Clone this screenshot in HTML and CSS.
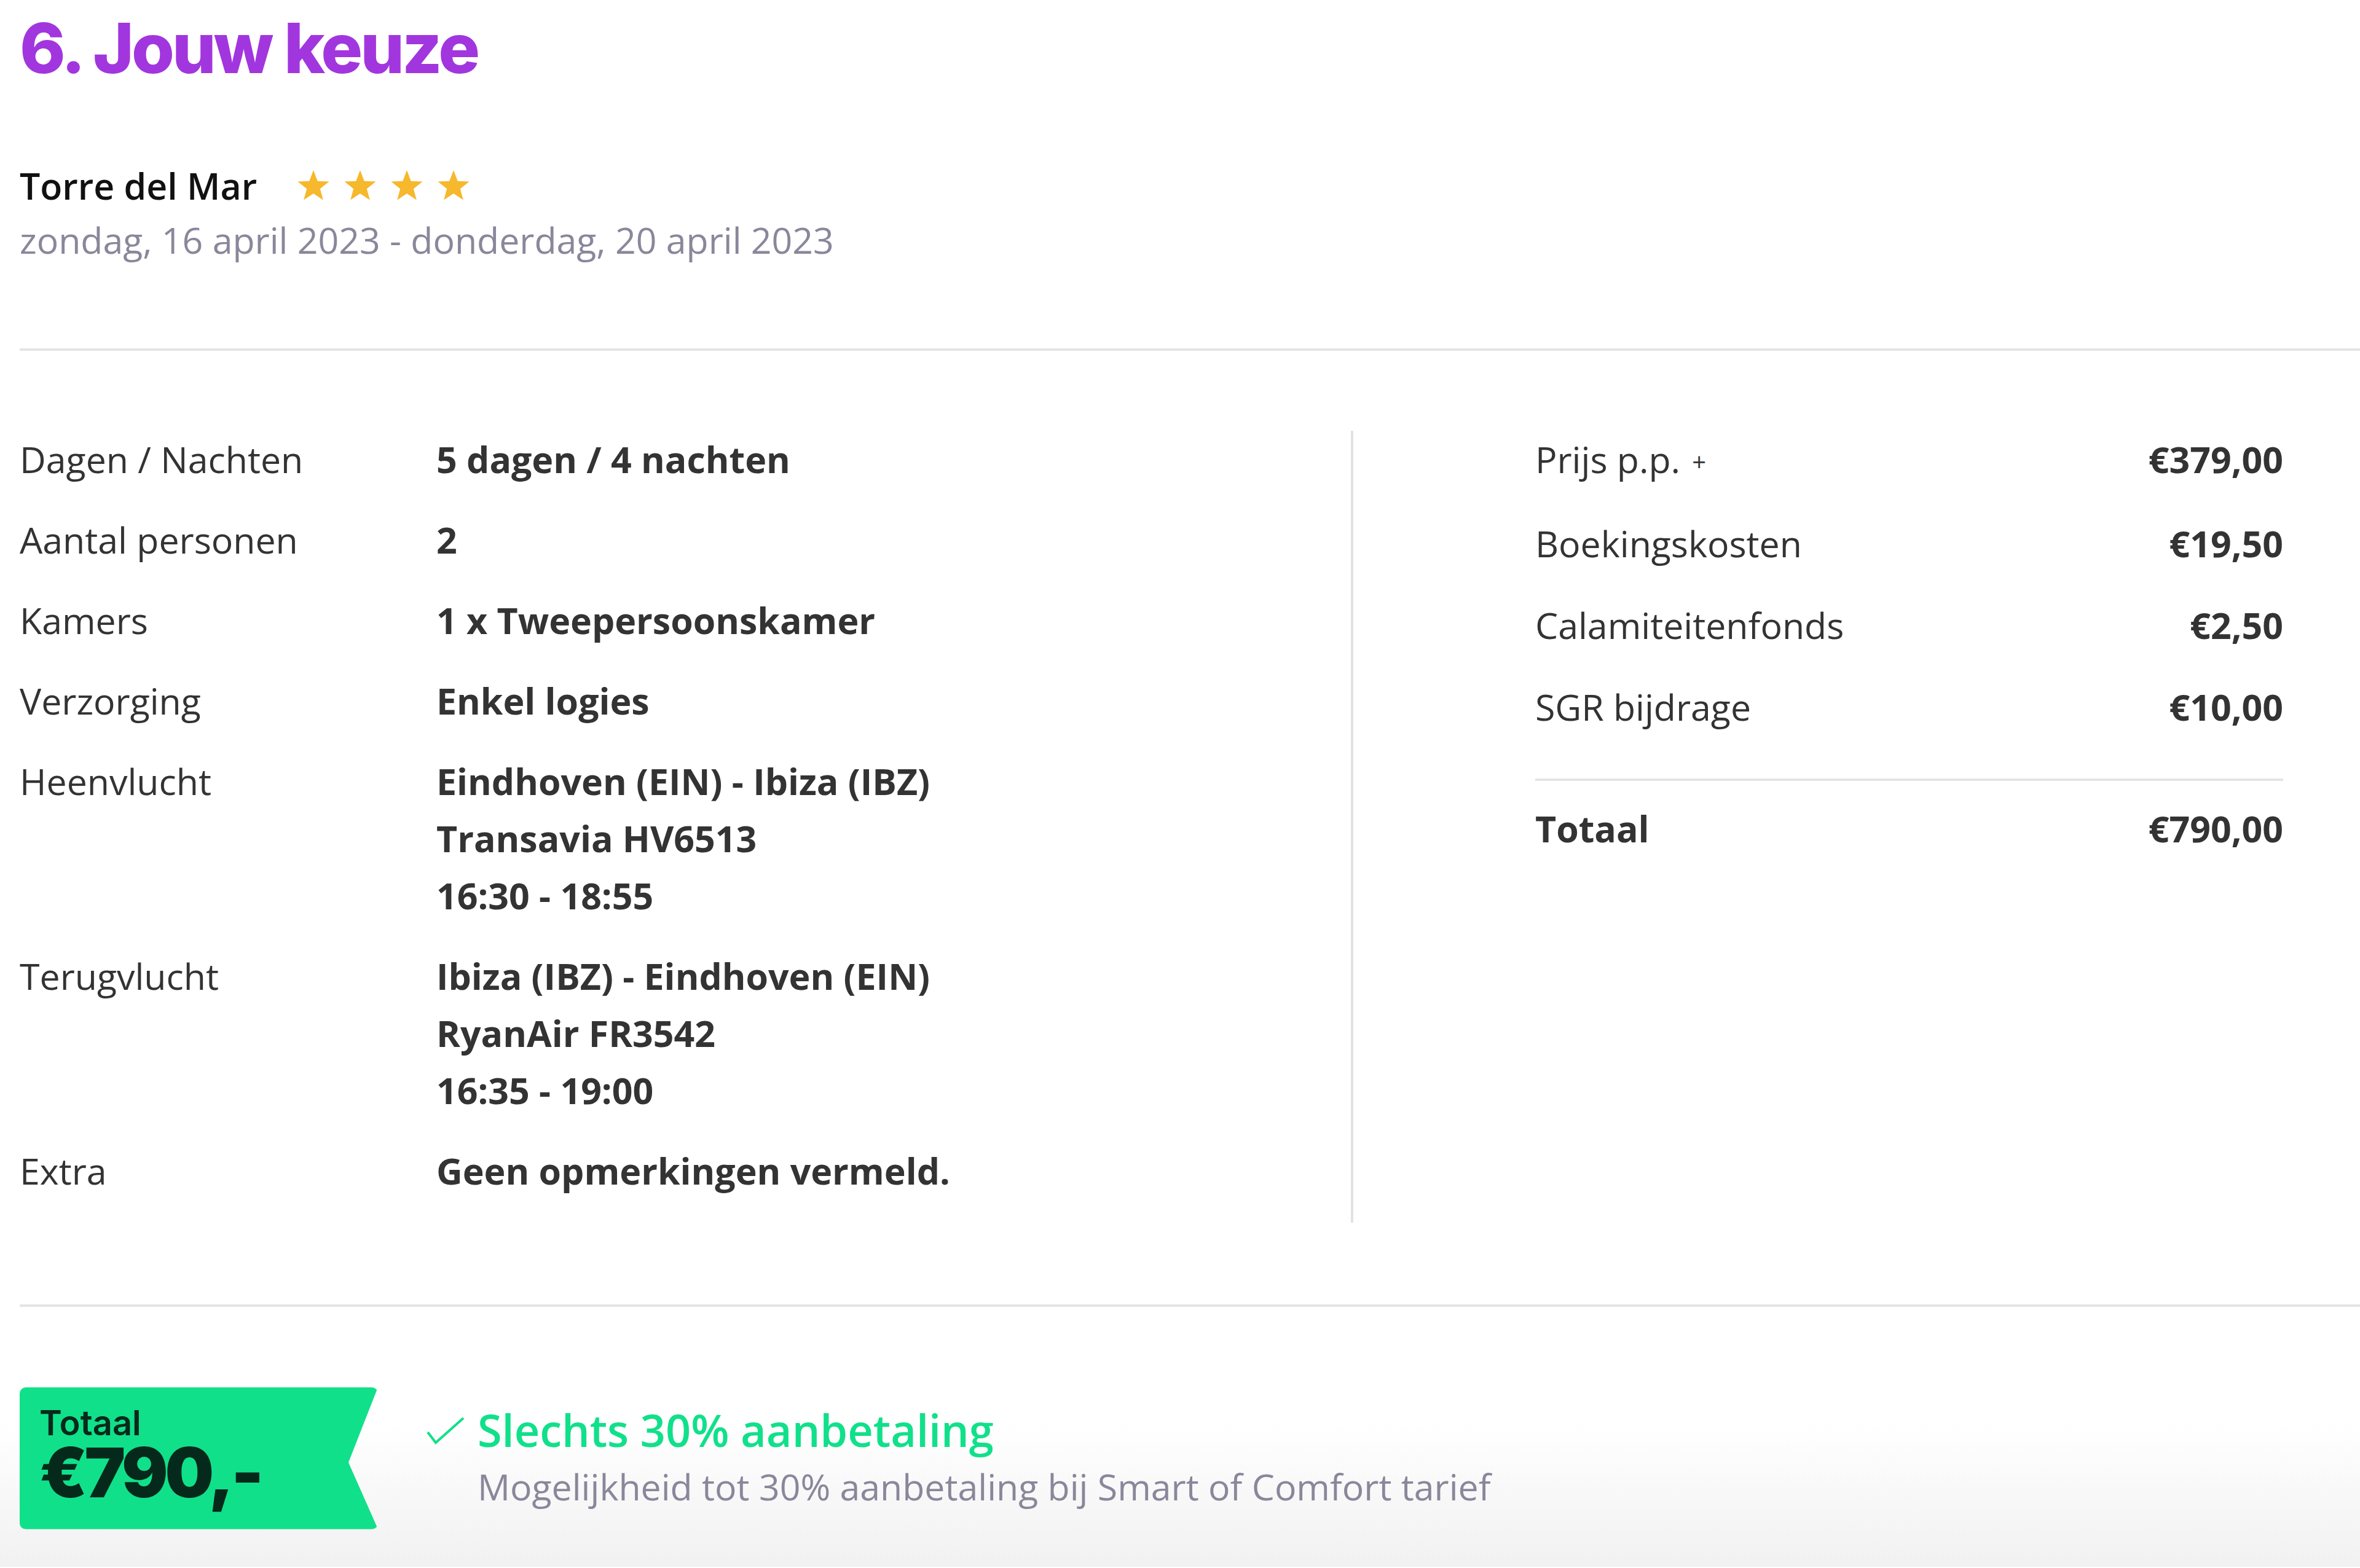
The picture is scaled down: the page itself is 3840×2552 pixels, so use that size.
FILE: index.html
```html
<html>
    <head>
        <title>Jouw keuze</title>
        <link rel="stylesheet" href="styles.css">
    </head>
    <body>
        <div class="page">
            <h1 class="step_title">6. Jouw keuze</h1>

            <div class="hotel">
                <div class="hotel_name">
                    <span>Torre del Mar</span>
                    <span class="stars">
                        <svg viewBox="0 0 24 24"><polygon points="12,0.5 15.1,8.6 23.8,9 17,14.4 19.3,22.8 12,18 4.7,22.8 7,14.4 0.2,9 8.9,8.6"/></svg>
                        <svg viewBox="0 0 24 24"><polygon points="12,0.5 15.1,8.6 23.8,9 17,14.4 19.3,22.8 12,18 4.7,22.8 7,14.4 0.2,9 8.9,8.6"/></svg>
                        <svg viewBox="0 0 24 24"><polygon points="12,0.5 15.1,8.6 23.8,9 17,14.4 19.3,22.8 12,18 4.7,22.8 7,14.4 0.2,9 8.9,8.6"/></svg>
                        <svg viewBox="0 0 24 24"><polygon points="12,0.5 15.1,8.6 23.8,9 17,14.4 19.3,22.8 12,18 4.7,22.8 7,14.4 0.2,9 8.9,8.6"/></svg>
                    </span>
                </div>
                <div class="hotel_dates">zondag, 16 april 2023 - donderdag, 20 april 2023</div>
            </div>

            <div class="line top_line"></div>

            <div class="summary">
                <div class="details">
                    <div class="row">
                        <div class="label">Dagen / Nachten</div>
                        <div class="value">5 dagen / 4 nachten</div>
                    </div>
                    <div class="row">
                        <div class="label">Aantal personen</div>
                        <div class="value">2</div>
                    </div>
                    <div class="row">
                        <div class="label">Kamers</div>
                        <div class="value">1 x Tweepersoonskamer</div>
                    </div>
                    <div class="row">
                        <div class="label">Verzorging</div>
                        <div class="value">Enkel logies</div>
                    </div>
                    <div class="row">
                        <div class="label">Heenvlucht</div>
                        <div class="value">
                            Eindhoven (EIN) - Ibiza (IBZ)<br>
                            Transavia HV6513<br>
                            16:30 - 18:55
                        </div>
                    </div>
                    <div class="row">
                        <div class="label">Terugvlucht</div>
                        <div class="value">
                            Ibiza (IBZ) - Eindhoven (EIN)<br>
                            RyanAir FR3542<br>
                            16:35 - 19:00
                        </div>
                    </div>
                    <div class="row">
                        <div class="label">Extra</div>
                        <div class="value">Geen opmerkingen vermeld.</div>
                    </div>
                </div>

                <div class="prices">
                    <div class="price_row">
                        <span>Prijs p.p. <span class="plus">+</span></span>
                        <span class="amount">€379,00</span>
                    </div>
                    <div class="price_row">
                        <span>Boekingskosten</span>
                        <span class="amount">€19,50</span>
                    </div>
                    <div class="price_row">
                        <span>Calamiteitenfonds</span>
                        <span class="amount">€2,50</span>
                    </div>
                    <div class="price_row">
                        <span>SGR bijdrage</span>
                        <span class="amount">€10,00</span>
                    </div>
                    <div class="price_line"></div>
                    <div class="price_row total_row">
                        <span>Totaal</span>
                        <span class="amount">€790,00</span>
                    </div>
                </div>
            </div>

            <div class="line bottom_line"></div>

            <div class="footer">
                <div class="total_tag">
                    <div class="tag_label">Totaal</div>
                    <div class="tag_amount">€790,-</div>
                </div>
                <div class="deposit">
                    <svg class="check" viewBox="0 0 64 48"><polyline points="3,26 16,43 61,3"/></svg>
                    <div>
                        <div class="deposit_title">Slechts 30% aanbetaling</div>
                        <div class="deposit_text">Mogelijkheid tot 30% aanbetaling bij Smart of Comfort tarief</div>
                    </div>
                </div>
            </div>
        </div>
    </body>
</html>
```

FILE: styles.css
```css
body {
    margin: 0;
    background: #fff;
    font-family: "Open Sans", "Liberation Sans", sans-serif;
    color: #333;
}

.page {
    padding: 10px 0 0 32px;
    overflow: hidden;
}

.step_title {
    margin: 0;
    font-family: Inter, "Open Sans", sans-serif;
    font-weight: 800;
    font-size: 113px;
    line-height: 1.21;
    letter-spacing: -4px;
    color: #a236de;
}

.hotel {
    margin-top: 111px;
    font-size: 59px;
    line-height: 88px;
}

.hotel_name {
    display: flex;
    align-items: center;
    font-weight: 600;
    color: #111;
}

.stars {
    display: flex;
    gap: 24px;
    margin-left: 66px;
}

.stars svg {
    width: 52px;
    height: 52px;
    fill: #f6b82c;
}

.hotel_dates {
    color: #8a879b;
}

.line {
    height: 4px;
    background: #e4e4e4;
}

.top_line {
    margin-top: 133px;
}

.summary {
    display: grid;
    grid-template-columns: 2166px 1fr;
    margin-top: 130px;
    font-size: 59px;
    line-height: 93px;
}

.row {
    display: grid;
    grid-template-columns: 678px 1fr;
    margin-bottom: 38px;
}

.value {
    font-weight: 700;
}

.prices {
    border-left: 4px solid #e2e2e2;
    padding: 0 125px 0 296px;
}

.price_row {
    display: flex;
    justify-content: space-between;
    margin-bottom: 40px;
}

.amount {
    font-weight: 700;
}

.plus {
    font-size: 40px;
    margin-left: 4px;
    vertical-align: 3px;
}

.price_line {
    height: 4px;
    background: #e4e4e4;
    margin-top: 70px;
    margin-bottom: 31px;
}

.total_row {
    font-weight: 700;
}

.bottom_line {
    margin-top: 133px;
}

.footer {
    display: flex;
    align-items: center;
    gap: 78px;
    margin-left: -32px;
    padding: 131px 0 61px 32px;
    background: linear-gradient(to bottom, #fff 45%, #f1f1f1 100%);
}

.total_tag {
    width: 583px;
    height: 231px;
    box-sizing: border-box;
    padding: 30px 0 0 32px;
    background: #11e08a;
    border-radius: 10px;
    clip-path: polygon(0 0, 100% 0, calc(100% - 48px) 53%, 100% 100%, 0 100%);
    color: #05291b;
    font-family: Inter, "Open Sans", sans-serif;
}

.tag_label {
    font-size: 56px;
    font-weight: 600;
    line-height: 56px;
}

.tag_amount {
    margin-top: 2px;
    font-size: 112px;
    font-weight: 900;
    line-height: 100px;
    letter-spacing: -5px;
}

.deposit {
    display: flex;
    align-items: flex-start;
    gap: 20px;
}

.check {
    width: 64px;
    height: 48px;
    margin-top: 24px;
    fill: none;
    stroke: #11e08a;
    stroke-width: 4;
}

.deposit_title {
    font-size: 72px;
    font-weight: 600;
    line-height: 92px;
    color: #11e08a;
}

.deposit_text {
    font-size: 59px;
    line-height: 92px;
    color: #8a879b;
}
```
